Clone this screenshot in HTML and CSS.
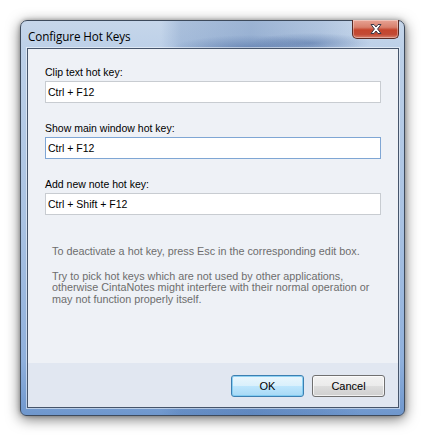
FILE: index.html
```html
<!DOCTYPE html>
<html>
<head>
<meta charset="utf-8">
<link rel="stylesheet" href="styles.css">
</head>
<body>
<div class="window">
  <div class="titlebar">
    <span class="title">Configure Hot Keys</span>
    <div class="close">
      <svg width="16" height="12" viewBox="0 0 16 12">
        <path d="M3 1.5 L6 1.5 L8 4 L10 1.5 L13 1.5 L9.6 6 L13 10.5 L10 10.5 L8 8 L6 10.5 L3 10.5 L6.4 6 Z" fill="#ffffff" stroke="#3a3a48" stroke-width="1" stroke-linejoin="round"/>
      </svg>
    </div>
  </div>
  <div class="client">
    <div class="content">
      <div class="field">
        <label class="label">Clip text hot key:</label>
        <div class="input">Ctrl + F12</div>
      </div>
      <div class="field">
        <label class="label">Show main window hot key:</label>
        <div class="input focused">Ctrl + F12</div>
      </div>
      <div class="field">
        <label class="label">Add new note hot key:</label>
        <div class="input">Ctrl + Shift + F12</div>
      </div>
      <p class="note first">To deactivate a hot key, press Esc in the corresponding edit box.</p>
      <p class="note">Try to pick hot keys which are not used by other applications, otherwise CintaNotes might interfere with their normal operation or may not function properly itself.</p>
    </div>
    <div class="buttons">
      <button class="btn default">OK</button>
      <button class="btn">Cancel</button>
    </div>
  </div>
</div>
</body>
</html>
```

FILE: styles.css
```css
html, body {
  margin: 0;
  padding: 0;
  background: #ffffff;
}
body {
  width: 426px;
  height: 437px;
  overflow: hidden;
}
.window {
  margin: 20px 0 0 20px;
  width: 385px;
  height: 396px;
  box-sizing: border-box;
  border: 1px solid #3d4a5c;
  border-radius: 7px 7px 6px 6px;
  background:
    radial-gradient(ellipse 80px 14px at 230px 28px, rgba(50,85,145,0.45), rgba(50,85,145,0) 100%),
    radial-gradient(ellipse 60px 10px at 290px 22px, rgba(50,85,145,0.4), rgba(50,85,145,0) 100%),
    linear-gradient(90deg, rgba(255,255,255,0) 0px, rgba(255,255,255,0) 140px, rgba(60,100,160,0.2) 160px, rgba(60,100,160,0.3) 230px, rgba(60,100,160,0.15) 300px, rgba(255,255,255,0) 340px),
    linear-gradient(180deg, #c6d6ea 0px, #bcd0e8 30px, #a9c2e2 200px, #8fb0dc 340px, #6f97cd 394px);
  box-shadow: 0 3px 14px rgba(0,0,0,0.55), 0 0 4px rgba(0,0,0,0.3);
  display: flex;
  flex-direction: column;
  padding: 0 5px 7px 6px;
  position: relative;
}
.titlebar {
  height: 27px;
  flex: none;
  display: flex;
  align-items: flex-start;
  position: relative;
}
.title {
  font-family: "Open Sans", "Noto Sans", sans-serif;
  font-size: 11.7px;
  color: #000000;
  margin: 7px 0 0 1px;
  letter-spacing: -0.1px;
}
.close {
  position: absolute;
  right: 0;
  top: -1px;
  width: 47px;
  height: 19px;
  box-sizing: border-box;
  border: 1px solid #5a2a24;
  border-top: none;
  border-radius: 0 0 5px 5px;
  background: linear-gradient(180deg, #e8a394 0%, #d8806d 40%, #c5452d 55%, #c24a35 80%, #d7806c 100%);
  box-shadow: inset 0 0 0 1px rgba(255,255,255,0.35);
  display: flex;
  align-items: center;
  justify-content: center;
}
.client {
  flex: 1;
  border: 1px solid #46556b;
  background: #eef1f6;
  display: flex;
  flex-direction: column;
  box-shadow: 0 0 0 1px rgba(255,255,255,0.5);
}
.content {
  flex: 1;
  padding: 16px 17px 0 17px;
  font-family: "Liberation Sans", Arial, sans-serif;
  font-size: 10.5px;
}
.field {
  display: flex;
  flex-direction: column;
  margin-bottom: 18px;
}
.label {
  color: #000000;
  height: 14px;
  line-height: 14px;
  margin-bottom: 2px;
}
.input {
  height: 22px;
  box-sizing: border-box;
  border: 1px solid #c8ccd1;
  background: #ffffff;
  padding: 0 0 0 2px;
  line-height: 20px;
  color: #000000;
}
.input.focused {
  border-color: #7fa6d4;
}
.note {
  color: #6d6d6d;
  font-size: 10.8px;
  margin: 0 0 0 7px;
  line-height: 11.5px;
  padding-right: 0;
}
.note.first {
  margin-top: 31px;
  margin-bottom: 13px;
}
.buttons {
  height: 44px;
  flex: none;
  background: #e1e7f1;
  display: flex;
  justify-content: flex-end;
  align-items: flex-start;
  gap: 8px;
  padding: 12px 13px 0 0;
  box-sizing: border-box;
}
.btn {
  width: 73px;
  height: 22px;
  box-sizing: border-box;
  font-family: "Liberation Sans", Arial, sans-serif;
  font-size: 11px;
  color: #000;
  border: 1px solid #707070;
  border-radius: 3px;
  background: linear-gradient(180deg, #f2f2f2 0%, #ebebeb 49%, #dddddd 50%, #cfcfcf 100%);
  box-shadow: inset 0 0 0 1px rgba(255,255,255,0.7);
  padding: 0;
}
.btn.default {
  border-color: #3c7fb1;
  background: linear-gradient(180deg, #eaf6fd 0%, #d9f0fc 49%, #bee6fd 50%, #a7d9f5 100%);
  box-shadow: inset 0 0 0 1px rgba(120,200,240,0.8);
}
```
